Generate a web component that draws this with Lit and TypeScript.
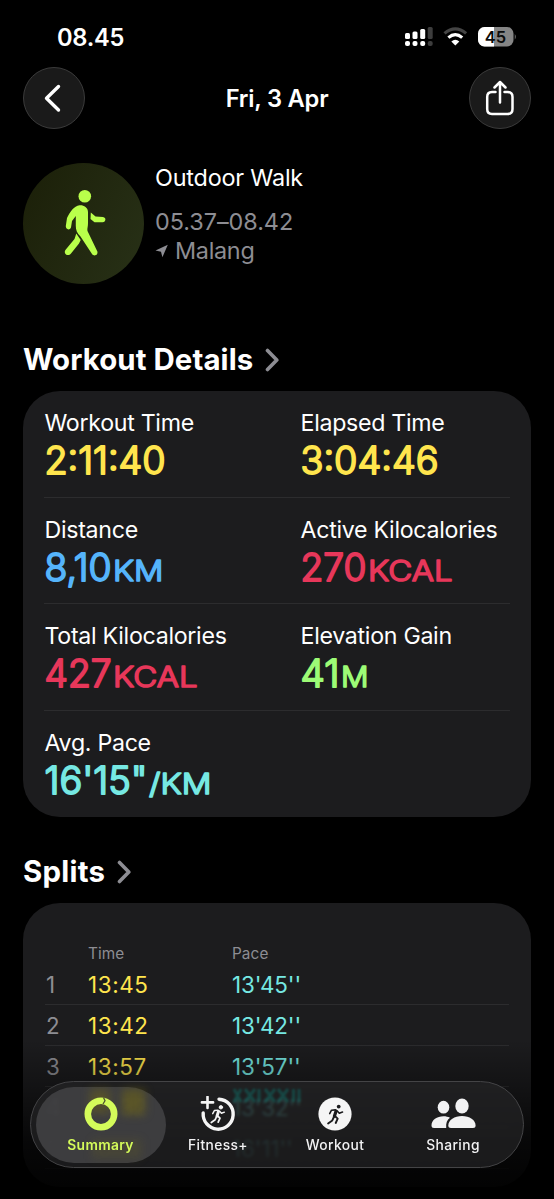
import { LitElement, html, css, svg } from "lit";
import { customElement, property } from "lit/decorators.js";

interface Metric { label: string; value: string; unit: string; color: string; width: number; unitWidth: number }

const METRICS: Metric[] = [
  { label: "Workout Time", value: "2:11:40", unit: "", color: "#ffe54d", width: 121, unitWidth: 0 },
  { label: "Elapsed Time", value: "3:04:46", unit: "", color: "#ffe54d", width: 138, unitWidth: 0 },
  { label: "Distance", value: "8,10", unit: "KM", color: "#55b4fb", width: 67, unitWidth: 50.5 },
  { label: "Active Kilocalories", value: "270", unit: "KCAL", color: "#e7375a", width: 66, unitWidth: 84.5 },
  { label: "Total Kilocalories", value: "427", unit: "KCAL", color: "#e7375a", width: 67, unitWidth: 84.5 },
  { label: "Elevation Gain", value: "41", unit: "M", color: "#9dfb76", width: 39, unitWidth: 27.5 },
  { label: "Avg. Pace", value: "16'15\"", unit: "/KM", color: "#76e8e3", width: 103, unitWidth: 62.5 },
];

const SPLITS = [
  ["1", "13:45", "13'45''"],
  ["2", "13:42", "13'42''"],
  ["3", "13:57", "13'57''"],
  ["4", "13:32", "13'32''"],
  ["5", "16:11", "16'11''"],
];

@customElement("metric-value")
class MetricValue extends LitElement {
  @property({ attribute: false }) metric!: Metric;
  static styles = css`
    :host { display: block; height: 42px; }
    svg { display: block; overflow: visible; font-family: Inter, "Liberation Sans", sans-serif; }
    text { font-weight: 300; stroke-width: 1.9px; stroke-linejoin: round; stroke-linecap: round; }
    .num { font-size: 37.4px; }
    .unit { font-size: 28.6px; stroke-width: 1.6px; }
  `;
  render() {
    const m = this.metric;
    return html`<svg width="220" height="42" fill=${m.color} stroke=${m.color}>
      <text class="num" x="0.500" y="36" textLength=${m.width} lengthAdjust="spacingAndGlyphs">${m.value}</text>
      ${m.unit ? svg`<text class="unit" x=${m.width + 2} y="36" textLength=${m.unitWidth} lengthAdjust="spacingAndGlyphs">${m.unit}</text>` : null}
    </svg>`;
  }
}

const runner = svg`
  <circle cx="14.2" cy="3.6" r="1.9" fill="currentColor"/>
  <g fill="none" stroke="currentColor" stroke-linecap="round" stroke-linejoin="round">
    <path d="M11.6 8 L9.9 13.2" stroke-width="3.2"/>
    <path d="M10.8 6.9 L7 7.2 L5.2 10.6 M12.8 8 L14.8 10.2 L18 9" stroke-width="1.6"/>
    <path d="M10.6 13.2 L13.2 15.6 L11.2 20 M9.4 14 L7.8 17.4 L3.6 20.4" stroke-width="1.9"/>
  </g>`;

@customElement("app-root")
class AppRoot extends LitElement {
  static styles = css`
    :host { display: block; position: relative; width: 554px; height: 1199px; overflow: hidden; background: #000; color: #fff;
      font-family: Inter, "Liberation Sans", sans-serif; }
    * { box-sizing: border-box; }
    svg { display: block; }
    .status { height: 67px; padding: 10px 38px 0 57px; display: flex; justify-content: space-between; align-items: flex-start; }
    .clock { font-size: 23.7px; font-weight: 600; line-height: 55px; letter-spacing: -0.3px; }
    .indicators { padding-top: 16px; }
    .nav { height: 62px; padding: 0 23px; display: flex; justify-content: space-between; align-items: center; }
    .round { width: 62px; height: 62px; border-radius: 50%; background: #1a1a1a; border: 1px solid #3b3b3b; display: grid; place-items: center; }
    .title { font-size: 23.7px; font-weight: 600; letter-spacing: -0.2px; }
    .hero { display: flex; padding: 34px 23px 0; height: 191px; gap: 11px; }
    .badge { width: 121px; height: 121px; border-radius: 50%; background: linear-gradient(115deg, #1b1f08, #283117); }
    .info { font-size: 23.4px; line-height: 29px; font-weight: 400; letter-spacing: -0.3px; }
    .name { letter-spacing: -0.2px; }
    .range { padding-top: 15px; color: #8d8d93; letter-spacing: -0.05px; }
    .place { display: flex; gap: 7px; align-items: center; color: #8d8d93; }
    .heading { height: 71px; padding: 21px 0 0 23px; display: flex; gap: 12px; font-size: 29.4px; line-height: 38px; font-weight: 700; letter-spacing: 0.08px; }
    .heading svg { margin-top: 7px; }
    .heading.splits { height: 86px; padding-top: 36px; letter-spacing: 0.25px; }
    .card { margin: 0 23px; background: #1c1c1e; border-radius: 37px; }
    .metrics { height: 426px; padding: 0 21px; }
    .mrow { height: 106.5px; display: grid; grid-template-columns: 256px 1fr; padding-top: 17px; border-bottom: 1px solid #2c2c2e; }
    .mrow:last-child { border: 0; }
    .mlabel { font-size: 23.2px; line-height: 30px; letter-spacing: -0.3px; padding-left: 0.5px; white-space: nowrap; }
    .table { height: 284px; padding: 39px 22px 0; }
    .thead, .srow { display: grid; grid-template-columns: 43px 144px 1fr; align-items: center; }
    .thead { height: 22px; font-size: 15.3px; color: #8d8d93; letter-spacing: .1px; }
    .srow { height: 41px; border-bottom: 1px solid #2c2c2e; font-size: 22.4px; }
    .idx { color: #8d8d93; padding-left: 1px; }
    .time { color: #ffe54d; letter-spacing: 0.6px; }
    .pace { color: #76e8e3; letter-spacing: -0.1px; }
    .fade { position: absolute; left: 0; right: 0; bottom: 0; height: 159px; background: linear-gradient(transparent, rgba(0,0,0,.75) 65%, rgba(0,0,0,.94)); }
    .tabs { position: absolute; left: 30px; top: 1081px; width: 494px; height: 87px; border-radius: 44px; border: 1px solid #444446;
      background: rgba(38,38,40,.66); backdrop-filter: blur(1.4px); display: grid; grid-template-columns: 130px 104px 130px 106px; padding: 5px; }
    .refraction { position: absolute; left: 0; top: 0; filter: blur(1.2px); }
    .tab { position: relative; height: 76px; display: flex; flex-direction: column; align-items: center; padding-top: 9px; gap: 3px; font-size: 13.8px; line-height: 20px; font-weight: 500; letter-spacing: .4px; color: #f2f2f3; white-space: nowrap; }
    .tab.on { border-radius: 38px; background: rgba(66,66,68,.88); color: #d4fb5a; font-weight: 600; letter-spacing: .35px; }
    .glow { position: absolute; left: 0; top: 0; filter: blur(4px); }
    .tab.on .icon, .tab.on .text { position: relative; left: -0.5px; }
  `;

  private chevron() {
    return html`<svg width="15" height="24" viewBox="0 0 15 24" fill="none" stroke="#8d8d93" stroke-width="3.6" stroke-linecap="round" stroke-linejoin="round"><path d="M2.5 2.5 L11.8 12 L2.5 21.5"/></svg>`;
  }

  render() {
    const rows: Metric[][] = [];
    for (let i = 0; i < METRICS.length; i += 2) rows.push(METRICS.slice(i, i + 2));
    return html`
      <div class="status">
        <div class="clock">08.45</div>
        <svg class="indicators" width="112" height="38" viewBox="0 0 112 22">
          <g fill="#fff"><rect x="1" y="7" width="5" height="6" rx="1.5"/><rect x="8.5" y="5.5" width="5" height="7.5" rx="1.5"/><rect x="16.200" y="3" width="5" height="10" rx="1.5"/>
          <rect x="1" y="15" width="5" height="5" rx="2"/><rect x="8.500" y="15" width="5" height="5" rx="2"/><rect x="16.200" y="15" width="5" height="5" rx="2"/></g>
          <g fill="#3d3d3d"><rect x="23.700" y="1" width="5" height="12" rx="1.5"/><rect x="23.700" y="15" width="5" height="5" rx="2"/></g>
          <g fill="none" stroke-width="3.2"><path d="M40.500 7.400 Q51.300 -1.800 62.100 7.400" stroke="#444"/><path d="M44.400 11.600 Q51.300 5.600 58.200 11.600" stroke="#fff"/></g>
          <path d="M47.300 15.500 Q51.300 12 55.300 15.500 L51.300 19.400 Z" fill="#fff"/>
          <rect x="74" y="1" width="35.500" height="19.500" rx="6.500" fill="#858585"/>
          <path d="M80.500 1 H90 V20.500 H80.500 A6.500 6.500 0 0 1 74 14 V7.500 A6.500 6.500 0 0 1 80.500 1 Z" fill="#fff"/>
          <path d="M110.800 8 Q112.600 10.700 110.800 13.500 Z" fill="#858585"/>
          <text x="91.400" y="16.600" text-anchor="middle" font-family="Inter, sans-serif" font-size="16.500" font-weight="600" fill="#0c0c0c">45</text>
        </svg>
      </div>
      <div class="nav">
        <div class="round"><svg width="28" height="30" viewBox="0 0 28 30" fill="none" stroke="#fff" stroke-width="3.400" stroke-linecap="round" stroke-linejoin="round"><path d="M18.500 3.500 L6.500 15.200 L18.500 27"/></svg></div>
        <div class="title">Fri, 3 Apr</div>
        <div class="round"><svg width="30" height="36" viewBox="0 0 30 36" fill="none" stroke="#fff" stroke-width="2.500" stroke-linecap="round" stroke-linejoin="round"><path d="M10.500 12 H7 Q2.200 12 2.200 17 V29 Q2.200 34 7 34 H22.500 Q27.500 34 27.500 29 V17 Q27.500 12 22.500 12 H19.500 M15 22.500 V2 M9.500 7.500 L15 2 L20.500 7.500"/></svg></div>
      </div>
      <div class="hero">
        <div class="badge">
          <svg width="121" height="121" viewBox="0 0 121 121" fill="#b9ff4b">
            <circle cx="61.800" cy="33.300" r="6.300"/>
            <path d="M56.500 42.300 C60 41.800 65 44 65 49 V60 C65 64 64 66 64.500 68 L74 87.700 C76 91 71.500 94.500 69 91 L57.500 73.500 C54 70 52.800 67 52.800 63 V53 L49 58 L48 64.500 C47 67.500 42.500 67 42.800 63 L44 55 C47 49 51 43 56.500 42.300 Z"/>
            <path d="M53.300 70.500 L57.700 77 L56 80.500 L48 90.500 C44.800 94.500 39.500 90 42.800 86.500 L51.500 76 Z"/>
            <path d="M67.800 49.500 L72.500 53.500 L80 54 C83.500 54.600 83 59 79.700 59.200 H71.500 L67.500 56 Z"/>
          </svg>
        </div>
        <div class="info">
          <div class="name">Outdoor Walk</div>
          <div class="range">05.37–08.42</div>
          <div class="place"><svg width="13" height="14" viewBox="0 0 13 14" fill="#8d8d93"><path d="M12.800 0.800 L7.400 13.300 L6 7.800 L0.500 6.400 Z"/></svg><span>Malang</span></div>
        </div>
      </div>
      <div class="heading"><span>Workout Details</span>${this.chevron()}</div>
      <div class="card metrics">
        ${rows.map(r => html`<div class="mrow">${r.map(m => html`<div><div class="mlabel">${m.label}</div><metric-value .metric=${m}></metric-value></div>`)}</div>`)}
      </div>
      <div class="heading splits"><span>Splits</span>${this.chevron()}</div>
      <div class="card table">
        <div class="thead"><span></span><span>Time</span><span>Pace</span></div>
        ${SPLITS.map(([n, t, p]) => html`<div class="srow"><span class="idx">${n}</span><span class="time">${t}</span><span class="pace">${p}</span></div>`)}
      </div>
      <div class="fade"></div>
      <div class="tabs">
        <svg class="refraction" width="300" height="40" viewBox="0 0 300 40" fill="none" stroke="#0f7069" stroke-width="3" opacity=".5">
          <path d="M203 7 L210 20 M210 7 L203 20 M214 7 L224 20 M224 7 L214 20 M228 7 V20 M234 7 L244 20 M244 7 L234 20 M247 7 L257 20 M257 7 L247 20 M262.500 7 V20 M268 7 V20"/>
        </svg>
        <div class="tab on">
          <svg class="glow" width="130" height="76" viewBox="0 0 130 76" fill="#8a7c00"><rect x="54" y="2" width="20" height="24" opacity=".3"/><rect x="86" y="2" width="23" height="26" opacity=".36"/><rect x="56" y="52" width="50" height="20" opacity=".12"/></svg>
          <svg class="icon" width="36" height="36" viewBox="0 0 36 36" fill="none"><circle cx="18" cy="18" r="13.200" stroke="#d4fb5a" stroke-width="6.600"/><path d="M20.500 1.500 L22 4.800 L20 8" stroke="#4d5230" stroke-width="1.300"/></svg>
          <span class="text">Summary</span></div>
        <div class="tab">
          <svg width="36" height="36" viewBox="0 0 36 36" fill="none" stroke="#f5f5f5" stroke-linecap="round"><path d="M19 3.200 A15 15 0 1 1 3.200 17" stroke-width="3.400"/><path d="M7.500 0.800 V12 M1.900 6.400 H13.100" stroke-width="2.600"/><svg x="8" y="8" width="20" height="20" viewBox="0 0 22 22" color="#f5f5f5">${runner}</svg></svg>
          <span>Fitness+</span></div>
        <div class="tab">
          <svg width="36" height="36" viewBox="0 0 36 36"><circle cx="18" cy="18" r="16.600" fill="#f5f5f5"/><svg x="7.500" y="7" width="22" height="22" viewBox="0 0 22 22" color="#1c1c1e">${runner}</svg></svg>
          <span>Workout</span></div>
        <div class="tab">
          <svg width="46" height="36" viewBox="0 0 46 36" fill="#f2f2f3"><ellipse cx="13.500" cy="11.200" rx="5.800" ry="6.400"/><path d="M1.500 29.500 C1.500 24 7 20.300 13.500 20.300 C16 20.300 18 20.800 20 21.800 C17 24 15.800 27 16.200 32 H4 Q1.500 32 1.500 29.500 Z"/><ellipse cx="32" cy="10" rx="6.700" ry="7.400"/><path d="M18.300 29.500 C18.300 24 24.500 20 32 20 C39.500 20 45.600 24 45.600 29.500 Q45.600 32 43 32 H21 Q18.300 32 18.300 29.500 Z"/></svg>
          <span>Sharing</span></div>
      </div>`;
  }
}
